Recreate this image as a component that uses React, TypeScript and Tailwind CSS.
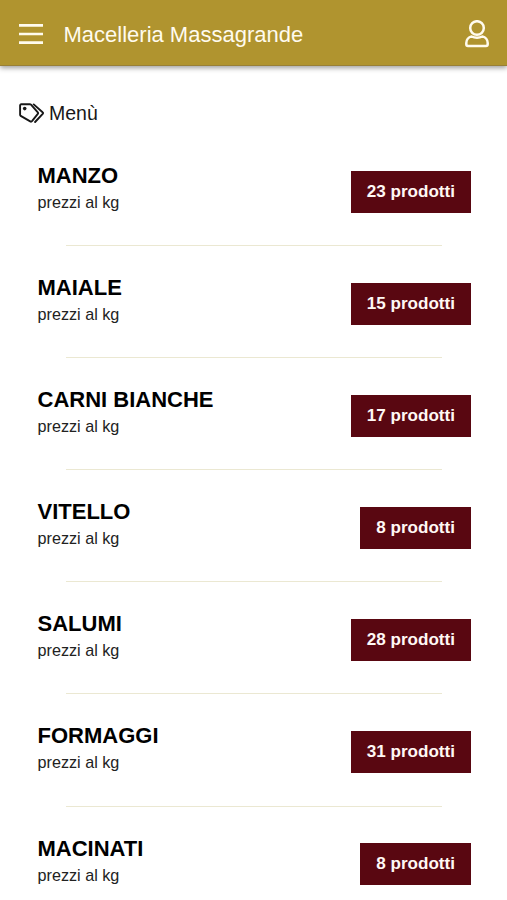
interface Category {
  name: string;
  note: string;
  count: number;
}

const categories: Category[] = [
  { name: "MANZO", note: "prezzi al kg", count: 23 },
  { name: "MAIALE", note: "prezzi al kg", count: 15 },
  { name: "CARNI BIANCHE", note: "prezzi al kg", count: 17 },
  { name: "VITELLO", note: "prezzi al kg", count: 8 },
  { name: "SALUMI", note: "prezzi al kg", count: 28 },
  { name: "FORMAGGI", note: "prezzi al kg", count: 31 },
  { name: "MACINATI", note: "prezzi al kg", count: 8 },
];

function MenuIcon() {
  return (
    <svg className="h-5 w-6" viewBox="0 0 24 20" fill="none" stroke="currentColor" strokeWidth="2.7" aria-hidden>
      <path d="M0 1.4h24M0 10h24M0 18.6h24" />
    </svg>
  );
}

function UserIcon() {
  return (
    <svg className="h-7 w-6" viewBox="0 0 24 28" fill="none" stroke="currentColor" strokeWidth="2.5" strokeLinejoin="round" aria-hidden>
      <circle cx="12" cy="8" r="6.8" />
      <path d="M6.6 16.5C3.5 17 1.3 19.7 1.3 23v1.3c0 1 .7 1.7 1.7 1.7h18c1 0 1.7-.7 1.7-1.7V23c0-3.3-2.2-6-5.3-6.5-1.6.8-3.4 1.2-5.4 1.2s-3.8-.4-5.4-1.2Z" />
    </svg>
  );
}

function TagsIcon() {
  return (
    <svg className="h-5 w-[26px]" viewBox="0 0 26 20" fill="none" stroke="currentColor" strokeWidth="1.9" strokeLinejoin="round" strokeLinecap="round" aria-hidden>
      <path d="M2.2 1.2h8.6c.5 0 .9.2 1.2.5l6.8 7.6c.4.5.4 1.1 0 1.6l-5.8 7.3c-.5.5-1.2.6-1.8.1L1.7 12.9c-.4-.3-.6-.7-.6-1.2V2.4c0-.7.5-1.2 1.1-1.2Z" />
      <path d="M14.7 1.4l8.9 7.9c.5.4.5 1 .1 1.5l-7.6 8.2" />
      <circle cx="5.7" cy="5.6" r="1.8" fill="currentColor" stroke="none" />
    </svg>
  );
}

function CategoryRow({ category }: { category: Category }) {
  return (
    <li className="group flex h-[112.1px] flex-col justify-between">
      <div className="flex items-start justify-between pr-9 pl-[37.5px]">
        <div>
          <h2 className="text-[22px] leading-[30px] font-bold text-black">{category.name}</h2>
          <p className="-mt-px text-[16.2px] leading-6 text-[#222222]">{category.note}</p>
        </div>
        <button className="mt-[9.5px] h-[42px] bg-[#590711] px-4 text-[17.1px] font-bold whitespace-nowrap text-[#fff8f4]">
          {category.count} prodotti
        </button>
      </div>
      <div className="mr-[65px] mb-[27px] ml-[66px] h-px bg-[#ebe8d2] group-last:hidden" />
    </li>
  );
}

export default function App() {
  return (
    <div className="h-[900px] overflow-hidden bg-white font-['Liberation_Sans',Arial,sans-serif]">
      <header className="flex h-[66px] items-center border-b border-[#988037] bg-[#b0942f] pt-[2px] pr-[18px] pl-[19px] text-[#fffbee] shadow-[0_2px_5px_rgba(0,0,0,0.38)]">
        <button aria-label="Apri menù">
          <MenuIcon />
        </button>
        <h1 className="ml-[20.5px] flex-1 pt-[3px] text-[22px] leading-7">Macelleria Massagrande</h1>
        <button aria-label="Profilo">
          <UserIcon />
        </button>
      </header>

      <main>
        {/* Section title */}
        <div className="flex h-[95px] items-center pb-px pl-[19px] text-[#181818]">
          <TagsIcon />
          <span className="ml-1 -mt-px text-[19.5px] leading-6">Menù</span>
        </div>

        <ul>
          {categories.map((category) => (
            <CategoryRow key={category.name} category={category} />
          ))}
        </ul>
      </main>
    </div>
  );
}
